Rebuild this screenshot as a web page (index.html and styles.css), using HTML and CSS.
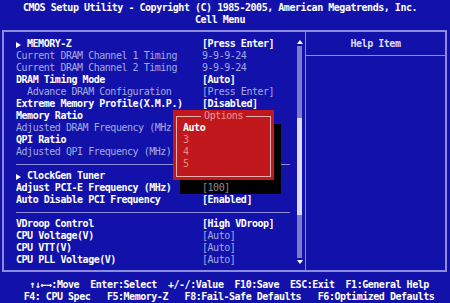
FILE: index.html
```html
<!DOCTYPE html>
<html>
<head>
    <link rel="stylesheet" href="styles.css">
</head>
<body>
    <div class="title">
        <div>CMOS Setup Utility - Copyright (C) 1985-2005, American Megatrends, Inc.</div>
        <div>Cell Menu</div>
    </div>

    <div class="frame">
        <div class="menu-panel">
            <div class="menu-list">
                <div class="row"><span class="on"><span class="arrow"></span>MEMORY-Z</span><span class="on">[Press Enter]</span></div>
                <div class="row"><span class="off">Current DRAM Channel 1 Timing</span><span class="off">9-9-9-24</span></div>
                <div class="row"><span class="off">Current DRAM Channel 2 Timing</span><span class="off">9-9-9-24</span></div>
                <div class="row"><span class="on">DRAM Timing Mode</span><span class="on">[Auto]</span></div>
                <div class="row"><span class="off">  Advance DRAM Configuration</span><span class="off">[Press Enter]</span></div>
                <div class="row"><span class="on">Extreme Memory Profile(X.M.P.)</span><span class="on">[Disabled]</span></div>
                <div class="row"><span class="on">Memory Ratio</span><span></span></div>
                <div class="row"><span class="off">Adjusted DRAM Frequency (MHz</span><span></span></div>
                <div class="row"><span class="on">QPI Ratio</span><span></span></div>
                <div class="row"><span class="off">Adjusted QPI Frequency (MHz)</span><span></span></div>
                <div class="sep"></div>
                <div class="row"><span class="on"><span class="arrow"></span>ClockGen Tuner</span><span></span></div>
                <div class="row"><span class="on">Adjust PCI-E Frequency (MHz)</span><span class="dim">[100]</span></div>
                <div class="row"><span class="on">Auto Disable PCI Frequency</span><span class="on">[Enabled]</span></div>
                <div class="sep"></div>
                <div class="row"><span class="on">VDroop Control</span><span class="on">[High VDroop]</span></div>
                <div class="row"><span class="on">CPU Voltage(V)</span><span class="off">[Auto]</span></div>
                <div class="row"><span class="on">CPU VTT(V)</span><span class="off">[Auto]</span></div>
                <div class="row"><span class="on">CPU PLL Voltage(V)</span><span class="off">[Auto]</span></div>
            </div>
            <div class="scrollbar">
                <div class="scroll-up"></div>
                <div class="scroll-track"><div class="scroll-thumb"></div></div>
                <div class="scroll-down"></div>
            </div>
        </div>
        <div class="help-panel">
            <div class="help-title">Help Item</div>
        </div>
    </div>

    <div class="footer">
        <div class="keys">↑↓←→:Move  Enter:Select  +/-/:Value  F10:Save  ESC:Exit  F1:General Help</div>
        <div class="keys">F4: CPU Spec   F5:Memory-Z   F8:Fail-Safe Defaults   F6:Optimized Defaults</div>
    </div>

    <div class="options">
        <div class="options-head"><span>Options</span></div>
        <div class="options-body">
            <div class="opt-current">Auto</div>
            <div>3</div>
            <div>4</div>
            <div>5</div>
        </div>
    </div>
</body>
</html>
```

FILE: styles.css
```css
body {
    margin: 0;
    width: 450px;
    height: 303px;
    overflow: hidden;
    background-color: #1212aa;
    color: #fff;
    font-family: "DejaVu Sans Mono", monospace;
    font-size: 10px;
    letter-spacing: -0.47px;
    line-height: 12px;
}

.title {
    height: 30px;
    padding: 2px 10px 0 0;
    box-sizing: border-box;
    text-align: center;
    font-weight: bold;
}

.frame {
    display: flex;
    height: 242px;
    margin: 0 3px 0 2px;
    border: 2px solid #8c8cdc;
    box-sizing: border-box;
}

.menu-panel {
    width: 301px;
    display: flex;
    padding: 6px 3px 4px 12px;
    box-sizing: border-box;
}

.menu-list {
    flex: 1;
}

.row {
    display: grid;
    grid-template-columns: 186px 1fr;
    height: 12px;
    white-space: pre;
}

.on {
    color: #fff;
    font-weight: bold;
}

.off {
    color: #a4aae4;
}

.dim {
    position: relative;
    z-index: 2;
    color: #8a8a9a;
}

.arrow {
    display: inline-block;
    margin-right: 6px;
    border-left: 5px solid #fff;
    border-top: 3px solid transparent;
    border-bottom: 3px solid transparent;
    vertical-align: -1px;
}

.sep {
    display: flex;
    align-items: center;
    height: 12px;
    margin-right: 3px;
}

.sep::before {
    content: "";
    flex: 1;
    border-top: 1px solid #8c8cdc;
}

.scrollbar {
    width: 5px;
    margin-left: 4px;
    display: flex;
    flex-direction: column;
}

.scroll-up,
.scroll-down {
    height: 8px;
    display: flex;
    justify-content: center;
    align-items: center;
}

.scroll-up::before {
    content: "";
    border-bottom: 4px solid #fff;
    border-left: 3px solid transparent;
    border-right: 3px solid transparent;
}

.scroll-down::before {
    content: "";
    border-top: 4px solid #fff;
    border-left: 3px solid transparent;
    border-right: 3px solid transparent;
}

.scroll-track {
    flex: 1;
    padding-top: 72px;
    background-color: #7c7cc8;
}

.scroll-thumb {
    height: 97px;
    background-color: #dcdcf8;
}

.help-panel {
    flex: 1;
    border-left: 1px solid #8c8cdc;
}

.help-title {
    padding: 6px 0 5px;
    border-bottom: 1px solid #8c8cdc;
    text-align: center;
    color: #dcdcff;
    font-weight: bold;
}

.footer {
    padding: 7px 0 0 8px;
    text-align: center;
    font-weight: bold;
}

.keys {
    white-space: pre;
}

/* popup list over the menu */
.options {
    position: absolute;
    left: 173px;
    top: 110px;
    width: 101px;
    height: 70px;
    padding: 0 3px 3px;
    box-sizing: border-box;
    z-index: 1;
    background-color: #c0181c;
    box-shadow: 7px 14px 0 #000;
}

.options-head {
    display: flex;
    height: 12px;
    color: #e89c9c;
}

.options-head span {
    padding: 0 3px;
}

.options-head::before,
.options-head::after {
    content: "";
    flex: 1;
    height: 5px;
    margin-top: 6px;
    border-top: 1px solid #eab0b0;
}

.options-head::before {
    border-left: 1px solid #eab0b0;
}

.options-head::after {
    border-right: 1px solid #eab0b0;
}

.options-body {
    padding: 0 0 6px 6px;
    border: 1px solid #eab0b0;
    border-top: none;
    color: #e88a8a;
}

.opt-current {
    color: #fff;
    font-weight: bold;
}
```
